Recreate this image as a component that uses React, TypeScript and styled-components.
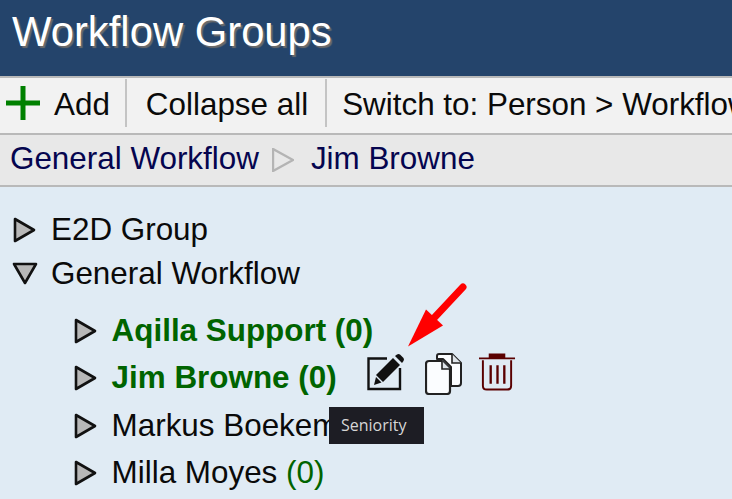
import styled, { createGlobalStyle } from "styled-components";

const GlobalStyle = createGlobalStyle`
  html, body {
    margin: 0;
    padding: 0;
    overflow: hidden;
    background: #e0ebf4;
    font-family: "Liberation Sans", Arial, sans-serif;
  }
`;

export default function App() {
  return (
    <>
      <GlobalStyle />
      <Page>
        <Header>
          <Title>Workflow Groups</Title>
        </Header>
        <Toolbar>
          <ToolButton $first>
            <AddIcon />
            Add
          </ToolButton>
          <ToolButton>Collapse all</ToolButton>
          <ToolButton $last>Switch to: Person &gt; Workflow</ToolButton>
        </Toolbar>
        <Breadcrumbs>
          <span>General Workflow</span>
          <CrumbArrow viewBox="0 0 22 24">
            <path d="M1 1 L21 12 L1 23 Z" fill="#e8e8e8" stroke="#b4b4b4" strokeWidth="2.4" />
          </CrumbArrow>
          <span>Jim Browne</span>
        </Breadcrumbs>
        <Tree>
          <GroupRow>
            <Expander />
            E2D Group
          </GroupRow>
          <GroupRow>
            <Expander $open />
            General Workflow
          </GroupRow>
          <Children>
            <ChildRow>
              <Expander />
              <Name $active>Aqilla Support (0)</Name>
            </ChildRow>
            <ChildRow>
              <Expander />
              <Name $active>Jim Browne (0)</Name>
              <Actions>
                <EditIcon />
                <CopyIcon />
                <TrashIcon />
              </Actions>
              <Tooltip>Seniority</Tooltip>
              <Pointer viewBox="0 0 72 72">
                <path d="M59 5 L30 36" stroke="#ff0000" strokeWidth="7" strokeLinecap="round" fill="none" />
                <path d="M22 27.500 L4 64.500 L39 43.500 Z" fill="#ff0000" />
              </Pointer>
            </ChildRow>
            <ChildRow>
              <Expander />
              <Name>Markus Boekem</Name>
            </ChildRow>
            <ChildRow>
              <Expander />
              <Name>
                Milla Moyes <Count>(0)</Count>
              </Name>
            </ChildRow>
          </Children>
        </Tree>
      </Page>
    </>
  );
}

function Expander({ $open }: { $open?: boolean }) {
  return (
    <ExpanderSvg viewBox="0 0 24 26" $open={$open}>
      <path d="M2 2 L21 13 L2 24 Z" fill="#b8b8b8" stroke="#111" strokeWidth="2.6" strokeLinejoin="round" />
    </ExpanderSvg>
  );
}

function AddIcon() {
  return (
    <AddSvg viewBox="0 0 34 34">
      <path d="M17 0 V34 M0 17 H34" stroke="#008000" strokeWidth="5" fill="none" />
    </AddSvg>
  );
}

function EditIcon() {
  return (
    <EditSvg viewBox="0 0 38 38">
      <path d="M33 15 V36 H1.500 V5.500 H20" fill="none" stroke="#111" strokeWidth="2.4" />
      <path d="M9 22 L26 5 L33 12 L16 29 Z" fill="#111" />
      <path d="M7 32 L9 24 L14.500 29.500 Z" fill="#111" />
      <path d="M28 3 L30 1.500 Q31.500 0.500 33 1.500 L36.500 5 Q37.500 6.500 36.500 8 L35 10 Z" fill="#111" />
    </EditSvg>
  );
}

function CopyIcon() {
  return (
    <CopySvg viewBox="0 0 38 42">
      <path d="M12 3 Q12 1 14 1 H27 L36 10 V30 Q36 33 33 33 H26 V14 L18 6 H12 Z" fill="#fbfdff" stroke="#222" strokeWidth="2" strokeLinejoin="round" />
      <path d="M27 1 V10 H36" fill="#dfe5ea" stroke="#222" strokeWidth="1.6" />
      <path d="M1 11 Q1 8 4 8 H17 L25 16 V38 Q25 41 22 41 H4 Q1 41 1 38 Z" fill="#fbfdff" stroke="#222" strokeWidth="2.2" strokeLinejoin="round" />
      <path d="M17 8 V16 H25" fill="#dfe5ea" stroke="#222" strokeWidth="1.6" />
    </CopySvg>
  );
}

function TrashIcon() {
  return (
    <TrashSvg viewBox="0 0 38 38">
      <path d="M0 5 H37" stroke="#5a0000" strokeWidth="2" />
      <rect x="10" y="0" width="17" height="5" fill="#5a0000" />
      <path d="M4 7 V33 Q4 37 8 37 H29 Q33 37 33 33 V7" fill="none" stroke="#5a0000" strokeWidth="2" />
      <path d="M12 12 V31 M19 12 V31 M26 12 V31" stroke="#5a0000" strokeWidth="2.4" />
    </TrashSvg>
  );
}

const Page = styled.div`
  width: 732px;
  height: 499px;
  overflow: hidden;
  display: flex;
  flex-direction: column;
`;

const Header = styled.header`
  height: 76px;
  flex: none;
  background: #24446b;
  box-sizing: border-box;
  padding: 8px 0 0 12px;
`;

const Title = styled.h1`
  margin: 0;
  font-size: 41.8px;
  line-height: 48px;
  font-weight: 400;
  color: #fff;
  text-shadow: 2px 2px 1px #6b6b6b;
  white-space: nowrap;
`;

const Toolbar = styled.nav`
  height: 59px;
  flex: none;
  box-sizing: border-box;
  background: #f2f2f2;
  border-top: 2px solid #b9b9b9;
  border-bottom: 2px solid #b9b9b9;
  padding-top: 1px;
  display: flex;
  align-items: flex-start;
  white-space: nowrap;
  overflow: hidden;
`;

const ToolButton = styled.div<{ $first?: boolean; $last?: boolean }>`
  height: 48px;
  box-sizing: border-box;
  display: flex;
  align-items: center;
  font-size: 31.4px;
  color: #0a0a0a;
  padding: 4px ${(p) => (p.$first ? "15px" : "17px")} 0 ${(p) => (p.$first ? "6px" : p.$last ? "15px" : "19px")};
  border-right: ${(p) => (p.$last ? "none" : "2px solid #c4c4c4")};
  flex: none;
`;

const AddSvg = styled.svg`
  width: 34px;
  height: 34px;
  margin: -4px 14px 0 0;
  flex: none;
`;

const Breadcrumbs = styled.div`
  height: 52px;
  flex: none;
  box-sizing: border-box;
  background: #e8e8e8;
  border-bottom: 2px solid #b9b9b9;
  padding-bottom: 3px;
  display: flex;
  align-items: center;
  padding-left: 10px;
  font-size: 31.4px;
  color: #05054f;
  white-space: nowrap;
`;

const CrumbArrow = styled.svg`
  width: 22px;
  height: 24px;
  margin: 2px 17px 0 13px;
  flex: none;
`;

const Tree = styled.main`
  flex: 1;
  background: #e0ebf4;
  padding-top: 21px;
  font-size: 31.4px;
  color: #0a0a0a;
`;

const GroupRow = styled.div`
  height: 44px;
  display: flex;
  align-items: center;
  padding-left: 13px;
  white-space: nowrap;
`;

const Children = styled.div`
  margin-top: 11px;
  padding-left: 74px;
`;

const ChildRow = styled.div`
  position: relative;
  height: 47.5px;
  display: flex;
  align-items: center;
  white-space: nowrap;
`;

const ExpanderSvg = styled.svg<{ $open?: boolean }>`
  width: 24px;
  height: 26px;
  margin-right: 14px;
  flex: none;
  transform: ${(p) => (p.$open ? "rotate(90deg)" : "none")};
`;

const Name = styled.span<{ $active?: boolean }>`
  margin-left: -0.4px;
  font-weight: ${(p) => (p.$active ? 700 : 400)};
  color: ${(p) => (p.$active ? "#006400" : "#0a0a0a")};
`;

const Count = styled.span`
  color: #006400;
`;

const Actions = styled.div`
  display: flex;
  align-items: center;
  margin: -7px 0 0 30.5px;
`;

const EditSvg = styled.svg`
  width: 38px;
  height: 38px;
  margin-top: -5px;
`;

const CopySvg = styled.svg`
  width: 38px;
  height: 42px;
  margin-left: 20px;
  margin-top: -1px;
`;

const TrashSvg = styled.svg`
  width: 37px;
  height: 38px;
  margin-left: 16px;
  margin-top: -5px;
`;

const Tooltip = styled.div`
  position: absolute;
  z-index: 2;
  left: 255px;
  top: 52.5px;
  width: 95px;
  height: 37px;
  box-sizing: border-box;
  padding-left: 12px;
  background: #1d1d24;
  color: #d6d6d6;
  font-family: "Open Sans", sans-serif;
  font-size: 16px;
  line-height: 37px;
`;

const Pointer = styled.svg`
  position: absolute;
  left: 330px;
  top: -73px;
  width: 72px;
  height: 72px;
`;
